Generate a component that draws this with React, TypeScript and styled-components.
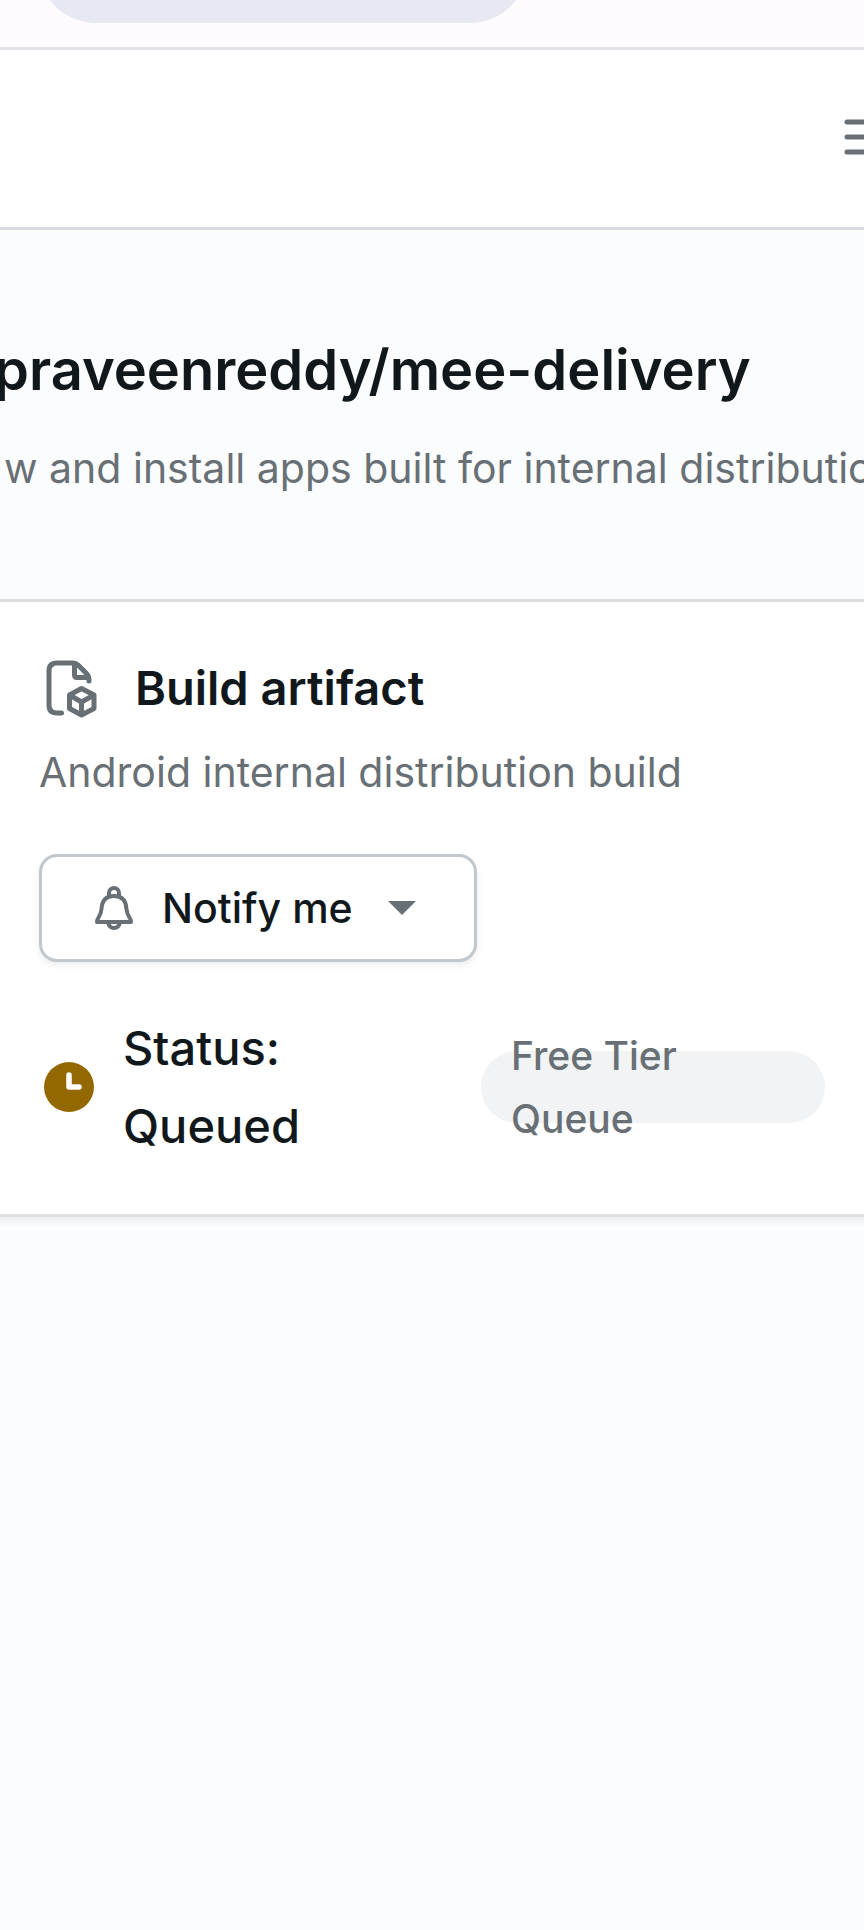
import React from "react";
import styled, { createGlobalStyle } from "styled-components";

const Global = createGlobalStyle`
  * { box-sizing: border-box; }
  html { background: #fbfcfe; }
  body { margin: 0; font-family: Inter, "Liberation Sans", sans-serif; color: #11181c; overflow-x: hidden; }
  h1, h2, p { margin: 0; }
`;
const Page = styled.div`
  min-height: 100vh;
  background: #fbfcfe;
  overflow: hidden;
`;
const BrowserBar = styled.div`
  display: flex;
  align-items: flex-end;
  height: 50px;
  padding: 0 38px 24px;
  overflow: hidden;
  background: #fdfbfe;
  border-bottom: 3px solid #e3e2e8;
`;
const AddressPill = styled.div`
  flex: none;
  width: 490px;
  height: 116px;
  border-radius: 58px;
  background: #e8e8f2;
`;
const Header = styled.header`
  display: flex;
  align-items: center;
  justify-content: flex-end;
  height: 180px;
  background: #fff;
  border-bottom: 3px solid #d7dbdf;
`;
const MenuButton = styled.button`
  display: flex;
  margin-right: -20px;
  padding: 0;
  border: 0;
  background: none;
  color: #687076;
`;
const Intro = styled.section`
  height: 372px;
  padding: 102px 0 0;
  white-space: nowrap;
  border-bottom: 3px solid #dfe1e3;
`;
const Title = styled.h1`
  margin-left: -6px;
  font-size: 56px;
  font-weight: 600;
  line-height: 76px;
`;
const Lead = styled.p`
  margin-top: 28px;
  padding-left: 4px;
  font-size: 41px;
  line-height: 64px;
  color: #687076;
`;
const Card = styled.section`
  padding: 50px 39px 49px;
  background: #fff;
  border-bottom: 3px solid #dfe1e3;
  box-shadow: 0 3px 6px 3px rgba(0, 0, 0, 0.05);
`;
const CardHeading = styled.div`
  display: flex;
  align-items: center;
  gap: 34px;
`;
const CardTitle = styled.h2`
  font-size: 47px;
  font-weight: 600;
  line-height: 72px;
`;
const Description = styled.p`
  margin-top: 16px;
  font-size: 41px;
  line-height: 64px;
  color: #687076;
`;
const NotifyButton = styled.button`
  display: flex;
  align-items: center;
  height: 108px;
  margin-top: 50px;
  padding: 0 58px 0 50px;
  border: 3px solid #c1c8cd;
  border-radius: 18px;
  background: #fff;
  color: #11181c;
  font: 500 41px/64px Inter, "Liberation Sans", sans-serif;
  box-shadow: 0 3px 6px rgba(0, 0, 0, 0.08);
`;
const ButtonLabel = styled.span`
  margin: 0 35px 0 24px;
`;
const StatusRow = styled.div`
  display: flex;
  align-items: center;
  margin-top: 47px;
`;
const Status = styled.p`
  flex: 1;
  margin-left: 26px;
  font-size: 47px;
  font-weight: 500;
  line-height: 78px;
`;
const Queue = styled.span`
  display: flex;
  align-items: center;
  width: 344px;
  height: 72px;
  padding: 0 120px 0 30px;
  border-radius: 36px;
  background: #f1f3f5;
  color: #687076;
  font-size: 39px;
  font-weight: 500;
  line-height: 63px;
`;

const MenuIcon = () => (
  <svg width="44" height="44" viewBox="0 0 44 44" stroke="currentColor" strokeWidth="5" strokeLinecap="round">
    <path d="M7 5H40M7 20H40M7 35H40" />
  </svg>
);
const ArtifactIcon = () => (
  <svg width="62" height="62" viewBox="0 0 62 62" fill="none" stroke="#687076" strokeWidth="5" strokeLinecap="round" strokeLinejoin="round">
    <path d="M22.5 56H18Q10 56 10 48V14Q10 6 18 6H34Q37 6 39 8L48 17Q50 19 50 22V24M35.500 7V18Q35.500 20.500 38 20.500H49" />
    <path d="M42.500 31.500L55 38V51.500L42.500 58L30.500 51.500V38ZM30.500 38L42.500 45L55 38M42.500 45V58" />
  </svg>
);
const BellIcon = () => (
  <svg width="46" height="46" viewBox="0 0 46 46" fill="none" stroke="#687076" strokeWidth="4" strokeLinejoin="round">
    <path d="M5 37C4 34 9 32 9.500 24C10 15 14 11 22 11C30 11 34 15 34.500 24C35 32 40 34 39 37Z" />
    <path d="M17 12V8A5 5 0 0 1 27 8V12M16 37Q17 43 22 43Q27 43 28 37" />
  </svg>
);
const CaretIcon = () => (
  <svg width="28" height="14" viewBox="0 0 28 14" fill="#687076"><path d="M0 0H28L14 14Z" /></svg>
);
const ClockIcon = () => (
  <svg width="58" height="58" viewBox="0 0 58 58">
    <circle cx="30" cy="29" r="25" fill="#946800" />
    <path d="M30 17V29H40" fill="none" stroke="#fff" strokeWidth="5.500" strokeLinecap="round" strokeLinejoin="round" />
  </svg>
);

export default function App() {
  return (
    <Page>
      <Global />
      <BrowserBar><AddressPill /></BrowserBar>
      <Header>
        <MenuButton aria-label="Menu"><MenuIcon /></MenuButton>
      </Header>
      <main>
        <Intro>
          <Title>praveenreddy/mee-delivery</Title>
          <Lead>w and install apps built for internal distribution</Lead>
        </Intro>
        <Card>
          <CardHeading>
            <ArtifactIcon />
            <CardTitle>Build artifact</CardTitle>
          </CardHeading>
          <Description>Android internal distribution build</Description>
          <NotifyButton>
            <BellIcon />
            <ButtonLabel>Notify me</ButtonLabel>
            <CaretIcon />
          </NotifyButton>
          <StatusRow>
            <ClockIcon />
            <Status>Status:<br />Queued</Status>
            <Queue>Free Tier Queue</Queue>
          </StatusRow>
        </Card>
      </main>
    </Page>
  );
}
